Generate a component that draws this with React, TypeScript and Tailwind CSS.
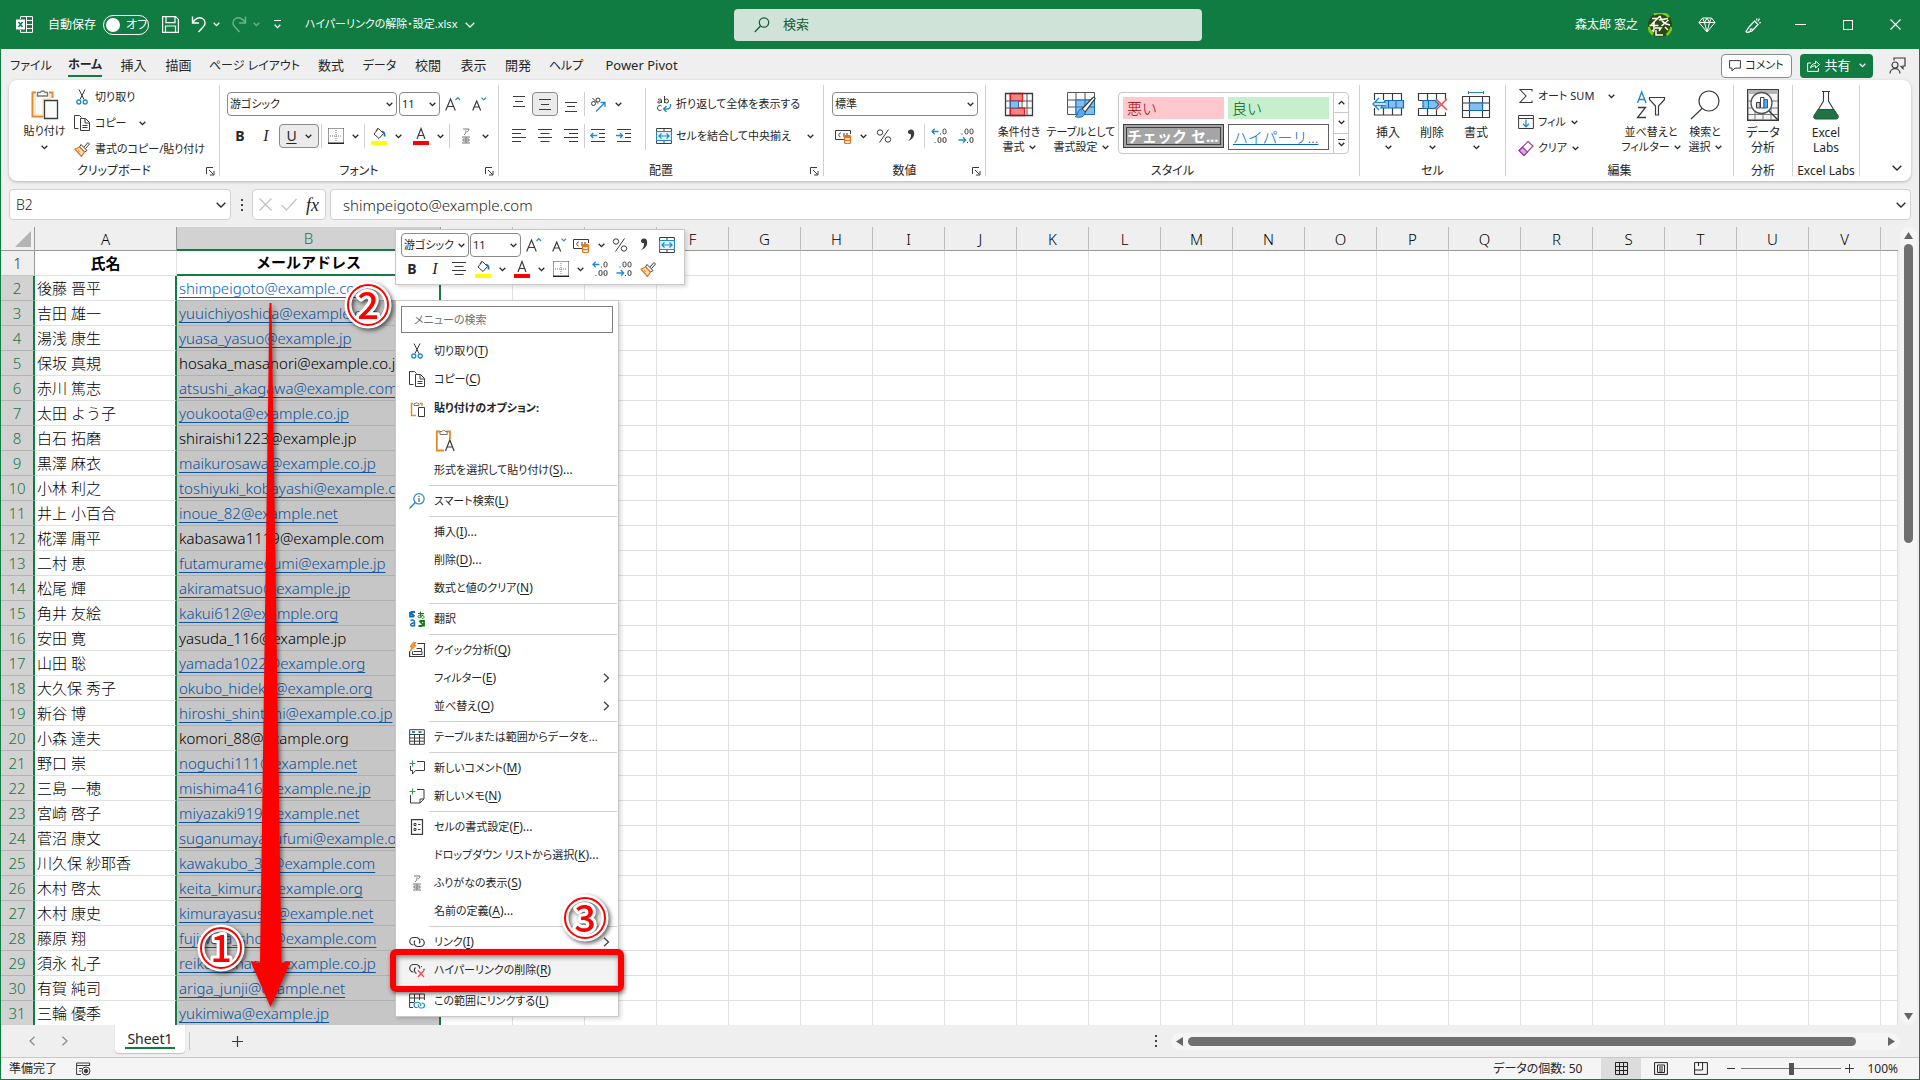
import React from "react";

type P = { children?: React.ReactNode; className?: string };

const D = "#3b3b3b";
const B = "#1e8bcd";

function Ico({ w = 16, h = 16, children, className = "" }: P & { w?: number; h?: number }) {
  return (
    <svg width={w} height={h} viewBox={`0 0 ${w} ${h}`} fill="none" stroke={D} className={`shrink-0 ${className}`} aria-hidden="true">
      {children}
    </svg>
  );
}

const Chev = ({ className = "" }: { className?: string }) => (
  <svg width="7" height="5" viewBox="0 0 7 5" fill="none" stroke="currentColor" strokeWidth="1.3" className={`shrink-0 ${className}`} aria-hidden="true">
    <path d="M.7.8l2.8 2.8L6.3.8" />
  </svg>
);
const BigChev = ({ className = "" }: { className?: string }) => (
  <svg width="10" height="6" viewBox="0 0 10 6" fill="none" stroke="currentColor" strokeWidth="1.3" className={`shrink-0 ${className}`} aria-hidden="true">
    <path d="M.7.7L5 5 9.3.7" />
  </svg>
);

/* ---------- icons ---------- */
const Scissors = () => (
  <Ico>
    <path d="M5 .5l5 10M11 .5l-5 10" />
    <circle cx="4.8" cy="13" r="2" stroke={B} strokeWidth="1.3" />
    <circle cx="11.2" cy="13" r="2" stroke={B} strokeWidth="1.3" />
  </Ico>
);
const CopyI = () => (
  <Ico>
    <path d="M4.5 13.500H.5V.5h5l2 2" />
    <path d="M6.500 3.500h5l4 4v8h-9z" fill="#fff" />
    <path d="M11 3.500V8h4.500M8.500 10.500h5M8.500 12.500h5" />
  </Ico>
);
const Brush = () => (
  <Ico>
    <path d="M10 6l4-4.500 1.500 1.500-4 4.500" fill="#fff" />
    <path d="M7 3.500l6 6-2.500 1.500L5.500 6z" fill="#fff" strokeLinejoin="round" />
    <path d="M5.500 6L1 8l6.500 7.500 3-4.500z" fill="#fbe3c8" stroke="#e07a1f" strokeWidth="1.300" strokeLinejoin="round" />
    <path d="M4 8.500l1.500 2.500" stroke="#e07a1f" />
  </Ico>
);
const PasteBig = () => (
  <Ico w={30} h={32}>
    <path d="M6 4.500H2.500v24h11M19 4.500h3.500V10" stroke="#e08a2c" strokeWidth="2" />
    <path d="M5 7h15v4h-7v16H5z" fill="#fafafa" stroke="#f9d8a8" />
    <path d="M7.500 8V4.500h2.800a2.500 2.500 0 0 1 4.600 0h2.600V8z" fill="#fff" stroke="#777" strokeWidth="1.300" />
    <path d="M14.500 12.500h13v18h-13z" fill="#fafafa" strokeWidth="1.300" />
  </Ico>
);
const PasteSmall = () => (
  <Ico>
    <path d="M4 2.500H2.500v12H7M11 2.500h2V5" stroke="#e08a2c" strokeWidth="1.500" />
    <path d="M5 4.500v-2h1.300a1.400 1.400 0 0 1 2.600 0h1.100v2z" fill="#fff" stroke="#777" />
    <path d="M9.500 6.500h6v9h-6z" fill="#fff" />
  </Ico>
);
const PasteText = () => (
  <Ico w={22} h={24}>
    <path d="M6 3.500H2.800v19H10M12 3.500h4V11" stroke="#e08a2c" strokeWidth="1.800" />
    <path d="M6 6.500v-3h2a1.700 1.700 0 0 1 3.200 0h2v3z" fill="#fff" stroke="#777" />
    <path d="M11.500 23l4.300-11 4.300 11M13 19h5.700" strokeWidth="1.200" />
  </Ico>
);
const Borders = () => (
  <Ico>
    <path d="M.5.500v15M15.500.500v15M.500.500h15" strokeDasharray="1 1" />
    <path d="M8 2v12M2 8h12" stroke="#777" strokeDasharray="1 1" />
    <path d="M0 15.300h16" stroke="#222" strokeWidth="1.500" />
  </Ico>
);
const Fill = () => (
  <Ico h={18}>
    <path d="M7.500 1.500l5 5-4.500 5-5-4.500z" fill="#fff" strokeLinejoin="round" />
    <path d="M5 4l2-3" />
    <path d="M11 4.500c2 .5 3 2 2.500 5" stroke="#1c6fb0" strokeWidth="1.800" />
    <path d="M0 16h16" stroke="#ff0" strokeWidth="4" />
  </Ico>
);
const FontColor = () => (
  <Ico h={18}>
    <path d="M4 12L8 1.500 12 12M5.300 8.500h5.400" strokeWidth="1.200" />
    <path d="M0 16h16" stroke="#f00" strokeWidth="4" />
  </Ico>
);
const Ruby = () => (
  <Ico>
    <path d="M5 1h6c0 1.500-1 2.500-2 3M8 2.500C8 5 7.500 6 6 6.800" stroke="#777" />
    <path d="M4 9h8M5 11h6v2H5zM4 15h8M8 9v6" stroke="#777" />
  </Ico>
);
const GrowA = () => (
  <Ico>
    <path d="M.700 14.500L5.500 3l4.800 11.500M2.400 10.500h6.200" strokeWidth="1.200" />
    <path d="M10.500 4l2.300-2.300L15 4" stroke={B} strokeWidth="1.200" />
  </Ico>
);
const ShrinkA = () => (
  <Ico>
    <path d="M1.700 14.500l4-9.500 4 9.500M3.200 11h5" strokeWidth="1.200" />
    <path d="M10.500 1.700L12.800 4 15 1.700" stroke={B} strokeWidth="1.200" />
  </Ico>
);
const Lines = ({ d }: { d: string }) => (
  <Ico>
    <path d={d} />
  </Ico>
);
const alignTop = "M2 .500h12M4 5.500h8M2 10.500h12";
const alignMid = "M2 3.500h12M4 8.500h8M2 13.500h12";
const alignBot = "M2 6.500h12M4 10.500h8M2 15.500h12";
const alignL = "M1 1.500h14M1 5.500h9M1 9.500h14M1 13.500h9";
const alignC = "M1 1.500h14M3.500 5.500h9M1 9.500h14M3.500 13.500h9";
const alignR = "M1 1.500h14M6 5.500h9M1 9.500h14M6 13.500h9";
const Orient = () => (
  <Ico w={17}>
    <circle cx="3.500" cy="7.500" r="2" />
    <path d="M2.500 2l5.500 5.500" />
    <circle cx="8" cy="4" r="2" />
    <path d="M6 15.500l9-9M10.500 6.500H15V11" stroke={B} strokeWidth="1.300" />
  </Ico>
);
const Indent = ({ right = false }: { right?: boolean }) => (
  <Ico>
    <path d="M1 1.500h14M9 5.500h6M9 9.500h6M1 13.500h14" />
    <path d={right ? "M0 7.500h6.500M4 5l2.500 2.500L4 10" : "M.700 7.500h6.500M3.200 5L.700 7.500 3.200 10"} stroke={B} strokeWidth="1.300" />
  </Ico>
);
const Wrap = () => (
  <Ico>
    <path d="M2 3.500c2-1 3.500-.5 3.500 1V7M5.500 5C1 4.500 1 7 3 7c1.500 0 2.500-1 2.500-2M8.500 0v7" />
    <circle cx="10.500" cy="5" r="2" />
    <path d="M5.500 10c-1.500-1-4-.5-4 2s2.500 3 4 2" />
    <path d="M14.500 8c.5 3-1 5-3.500 5H8M10.500 10L7.500 13l3 3" stroke={B} strokeWidth="1.300" />
  </Ico>
);
const Merge = () => (
  <Ico>
    <path d="M.600.500h14.800v15H.600zM8 .500v3M8 12.500v3" />
    <path d="M.600 3.500h14.800v9H.600z" fill="#e4f2fc" stroke={B} />
    <path d="M3 8h10M5.500 5.500L3 8l2.500 2.500M10.500 5.500L13 8l-2.500 2.500" stroke={B} strokeWidth="1.200" />
  </Ico>
);
const Money = () => (
  <Ico w={17}>
    <path d="M9 11.500H.500v-9h15V6" />
    <path d="M6 5c-2.500-.5-3 4-.5 4M9 5v4M12 5v2" />
    <path d="M9.500 8.500v6c0 1.500 6 1.500 6 0v-6z" fill="#fff" stroke="#e07a1f" strokeWidth="1.300" />
    <path d="M9.500 8.500c0-1.600 6-1.600 6 0s-6 1.600-6 0M9.500 11.500c0 1.500 6 1.500 6 0" stroke="#e07a1f" strokeWidth="1.300" />
  </Ico>
);
const Percent = () => (
  <Ico>
    <circle cx="4" cy="4.500" r="2.700" />
    <circle cx="12" cy="11.500" r="2.700" />
    <path d="M12.500 1.500l-9 13" />
  </Ico>
);
const Comma = () => (
  <Ico w={10}>
    <path d="M5 1.500c-4 0-4 5 0 4.800C5.300 9 4 11.500 2 13c4-1.200 6.200-4 6.200-7.500C8.200 3 7 1.500 5 1.500z" fill={D} stroke="none" />
  </Ico>
);
const Zero = ({ x, y }: { x: number; y: number }) => <rect x={x} y={y} width="3" height="5" rx="1.500" />;
const DecInc = () => (
  <Ico>
    <path d="M1 3.500h6.500M3.700.800L1 3.500l2.700 2.700" stroke={B} strokeWidth="1.300" />
    <Zero x={12} y={1} />
    <Zero x={7} y={9.500} />
    <Zero x={12} y={9.500} />
    <path d="M9.500 5.500v1M4 14v1" />
  </Ico>
);
const DecDec = () => (
  <Ico>
    <path d="M.500 12h7M5 9.300L7.700 12 5 14.700" stroke={B} strokeWidth="1.300" />
    <Zero x={7} y={1} />
    <Zero x={12} y={1} />
    <Zero x={12} y={9.500} />
    <path d="M4 5.500v1M9.500 14v1" />
  </Ico>
);
const CondFmt = () => (
  <Ico w={30} h={26}>
    <path d="M1.500 1.500h27v22h-27zM1.500 9h27M1.500 16h27M6 1.500v22M18 1.500v22M23 1.500v22" fill="#fafafa" stroke="#555" />
    <path d="M6.500 1.500h12V9h-12zM6.500 16h14v7.500h-14z" fill="#ff8080" stroke="#e02020" strokeWidth="1.300" />
    <path d="M6.500 9h8v7h-8z" fill="#83beec" stroke="#1e6fb8" />
    <path d="M1.500 1.500h27v22h-27z" strokeWidth="1.300" />
  </Ico>
);
const TableFmt = () => (
  <Ico w={30} h={28}>
    <path d="M1.500 1.500h27v22h-27zM1.500 9h27M1.500 16h27M10 1.500v22M19 1.500v22" fill="#fafafa" stroke="#555" />
    <path d="M10 9h18.500v14.500H10z" fill="#83beec" stroke="#1e6fb8" />
    <path d="M19 9v14M10 16h18" stroke="#1e6fb8" />
    <path d="M16 18L27 6.500c1-.8 2.500.5 1.800 1.700L19 21z" fill="#fff" strokeWidth="1.200" />
    <path d="M16 18c-3 0-4 2-4.500 5-.5 1.500-1.500 2-2.500 2.500 5 2 10 .5 10-4.500z" fill="#5ea9e0" stroke="#1e6fb8" />
  </Ico>
);
const CellIns = () => (
  <Ico w={34} h={26}>
    <path d="M3.500 8V1.500h27v7M3.500 16v7h27v-7M12.500 1.500V8M21.500 1.500V8M12.500 16v7M21.500 16v7" strokeWidth="1.200" />
    <path d="M14 8.500h18.500v7.500H10z" fill="#83beec" stroke="#0f6cbd" strokeWidth="1.200" />
    <path d="M17.500 8.500V16M25 8.500V16" stroke="#0f6cbd" />
    <path d="M15 10.500H4.500v3H15z" fill="#fff" stroke="none" />
    <path d="M15 10.500H4M15 13.500H4M8 6L2 12l6 6" stroke={B} strokeWidth="1.400" />
  </Ico>
);
const CellDel = () => (
  <Ico w={34} h={26}>
    <path d="M3.500 8.500v-7h27v6M3.500 16.500v7h27v-3M12.500 1.500v7M21.500 1.500v7M12.500 16.500v7M21.500 16.500v7M3.500 8.500h5M3.500 16.500h5" strokeWidth="1.200" />
    <path d="M8 8.500h12l4 4-4 4H8z" fill="#83beec" stroke="#0f6cbd" strokeWidth="1.200" />
    <path d="M13.500 8.500v8" stroke="#0f6cbd" />
    <path d="M21 7l11 11M32 7L21 18" stroke="#f04a4a" strokeWidth="1.500" />
  </Ico>
);
const CellFmt = () => (
  <Ico w={30} h={28}>
    <path d="M7.500 0v3M22.500 0v3M7.500 1.500h15" stroke={B} strokeWidth="1.200" />
    <path d="M1.500 5.500h27v21h-27zM8.500 5.500v21M21.500 5.500v21M1.500 12h27M1.500 19.500h27" fill="#fafafa" strokeWidth="1.100" />
    <path d="M8.500 12h13v7.500h-13z" fill="#83beec" stroke="#0f6cbd" strokeWidth="1.200" />
  </Ico>
);
const Sigma = () => (
  <Ico>
    <path d="M14 3.500v-2H2l6 6.500-6 6.500h12v-2" strokeWidth="1.100" />
  </Ico>
);
const FillDown = () => (
  <Ico>
    <path d="M.600 1.500h14.800v13H.600zM.600 4.500h14.800" />
    <path d="M8 5.500v7M5 9.800l3 3 3-3" stroke={B} strokeWidth="1.300" />
  </Ico>
);
const Eraser = () => (
  <Ico>
    <path d="M10 1.500l5 4.500-9 9.500-5-5z" fill="#fff" stroke="#9b3fa5" strokeWidth="1.200" />
    <path d="M4.500 7.200l5 4.800L6 15.500l-5-5z" fill="#dda8e0" stroke="#9b3fa5" strokeWidth="1.200" />
  </Ico>
);
const SortFilter = () => (
  <Ico w={30} h={30}>
    <path d="M1.500 13L5.700 2 10 13M3 9.500h5.500" stroke={B} strokeWidth="1.400" />
    <path d="M2 17.500h7.500L1.500 27.500h8.500" strokeWidth="1.300" />
    <path d="M13.500 7.500h15v2l-6 6.500v9h-3v-9l-6-6.500z" strokeWidth="1.200" />
  </Ico>
);
const FindI = () => (
  <Ico w={30} h={30}>
    <circle cx="19" cy="11" r="10" strokeWidth="1.200" />
    <path d="M12 18.500L1 29" strokeWidth="1.200" />
  </Ico>
);
const DataAn = () => (
  <Ico w={32} h={32}>
    <path d="M.700.700h30.600v30.600H.700z" fill="#f6f6f6" strokeWidth="1.400" />
    <path d="M1 1h30v4H1z" fill="#b5b5b5" stroke="none" />
    <path d="M1 12h30M1 19h30M1 25.500h30M8 19v12M16 19v12M24 19v12" stroke="#777" />
    <circle cx="14.500" cy="14" r="10.500" fill="#fff" stroke="#555" strokeWidth="1.300" />
    <path d="M22 22l9 9" strokeWidth="1.400" />
    <path d="M9.500 13.500h3.500V19H9.500z" fill="#ccc" />
    <path d="M13.500 8.500h3.500V19h-3.500z" fill="#fff" />
    <path d="M17 10.500h3.500V19H17z" fill="#5ea9e0" stroke="#0f6cbd" />
  </Ico>
);
const Flask = () => (
  <Ico w={28} h={30}>
    <path d="M10 1.500h8M11.500 1.500V11L5.500 21M16.500 1.500V11l6 10" strokeWidth="1.100" />
    <path d="M6 19.500h16l4 6c.8 1.800 0 3.500-2 3.500H4c-2 0-2.800-1.700-2-3.500z" fill="#217346" stroke="#185c37" />
  </Ico>
);
const Launcher = () => (
  <Ico w={9} h={9}>
    <path d="M.500 7V.500H7M3 3l4.500 4.500M4 8h4V4" />
  </Ico>
);
const Chain = () => (
  <Ico>
    <path d="M4.500 11a3.700 3.700 0 0 1 0-7.500h2.700a3.700 3.700 0 0 1 3 5.800" strokeWidth="1.200" />
    <path d="M11.500 5a3.700 3.700 0 0 1 0 7.500H8.800a3.700 3.700 0 0 1-3-5.800" strokeWidth="1.200" />
  </Ico>
);
const ChainDel = () => (
  <Ico>
    <path d="M4.500 10a3.700 3.700 0 0 1 0-7.500h2.700a3.700 3.700 0 0 1 3.500 4" strokeWidth="1.200" />
    <path d="M7.500 11.500a3.700 3.700 0 0 1-1-6M12 4.500l1 .3M15 6.800v1.500" strokeWidth="1.200" />
    <path d="M9 8.500l6 6.500M15 8.500L9 15" stroke="#f04a4a" strokeWidth="1.300" />
  </Ico>
);
const SmartFind = () => (
  <Ico>
    <circle cx="10" cy="5.800" r="5.200" stroke={B} strokeWidth="1.200" />
    <path d="M6.300 9.500L.500 15.500" stroke={B} strokeWidth="1.300" />
    <path d="M10 5v4M10 3v1" />
  </Ico>
);
const Translate = () => (
  <Ico>
    <path d="M1 1v4.500h4M1 1l4.500 4.500M6 1H2" stroke="#0f6cbd" strokeWidth="1.800" />
    <path d="M1.500 9.500c2-1 4-.500 4 1.500v4.500M5.500 12C1 11.500 1 15 3 15c1.500 0 2.500-1 2.500-2" stroke="#0f6cbd" strokeWidth="1.400" />
    <path d="M9 2.500h6M11.500.500c0 3 0 5 .5 6.500M14 3.500c-1 3-5 4.500-5 2 0-2 6-2 6 .5 0 1-1 1.500-2 1.700" stroke="#107c10" />
    <path d="M10.500 10H15v5.500M15 15l-4.500-5M9.500 15h4" stroke="#107c10" strokeWidth="1.800" />
  </Ico>
);
const Quick = () => (
  <Ico>
    <path d="M8.500 1.500h7v13H.600V9" strokeWidth="1.200" />
    <path d="M4.500 9.500h8M12.500 9.500v-3h-5M3.500 9.500v3h9.500v-3" />
    <path d="M4 .500L1 5h2L1 9.500 7 3.500H5L7 .500z" fill="#f39a3c" stroke="#e07a1f" strokeWidth=".800" />
  </Ico>
);
const TableI = () => (
  <Ico>
    <path d="M.700.700h14.600v14.600H.700zM.700 5.500h14.600M.700 9h14.600M.700 12.200h14.600M5.500 5.500v9.800M10.500 5.500v9.800" />
    <path d="M3 3h3M9.500 3h3" stroke={B} strokeWidth="2" />
  </Ico>
);
const Comment = () => (
  <Ico>
    <path d="M8 1.500h7.500v9h-9L3.500 14v-3.500H1.500V6" />
    <path d="M3.500.500v6M.500 3.500h6" stroke="#2f9e4f" strokeWidth="1.200" />
  </Ico>
);
const Memo = () => (
  <Ico>
    <path d="M8 1.500h7v9.500l-4 4H1.500V7M11 15v-4h4" />
    <path d="M3.500.500v6M.500 3.500h6" stroke="#2f9e4f" strokeWidth="1.200" />
  </Ico>
);
const CellProps = () => (
  <Ico>
    <path d="M2.500.700h11v14.600h-11z" strokeWidth="1.200" />
    <path d="M5 4.500h2v2H5zM5 9.500h2v2H5zM9 5.500h2.500M9 10.500h2.500" />
  </Ico>
);
const RangeLink = () => (
  <Ico>
    <path d="M4 14.500H.600V1h14.800v6M.600 5h14.800M.600 9.500H5M5.500 1v8M10.500 1v6" />
    <path d="M8.500 14.500h-1a2.500 2.500 0 0 1 0-5h2a2.500 2.500 0 0 1 2 3.500M12.500 10h.5a2.500 2.500 0 0 1 0 5h-1.500a2.500 2.500 0 0 1-2-3.500" stroke={B} strokeWidth="1.200" />
  </Ico>
);

/* ---------- ribbon building blocks ---------- */
function Group({ label, width, launcher, children }: P & { label: string; width: string; launcher?: boolean }) {
  return (
    <section className={`flex shrink-0 ${width}`} aria-label={label}>
      <div className="flex min-w-0 flex-1 flex-col">
        <div className="h-[81px]">{children}</div>
        <div className="relative flex h-5 items-center justify-center whitespace-nowrap text-xs">
          {label}
          {launcher && (
            <button aria-label={`${label}の設定`} className="absolute right-1 top-[6px]">
              <Launcher />
            </button>
          )}
        </div>
      </div>
      <div className="my-[5px] w-px bg-[#d0d0d0]" />
    </section>
  );
}
const VSep = ({ className = "h-6" }: { className?: string }) => <div className={`w-px shrink-0 bg-[#d0d0d0] ${className}`} />;
function IB({ label, w = "w-[26px]", on, children }: P & { label: string; w?: string; on?: boolean }) {
  return (
    <button aria-label={label} className={`flex h-6 shrink-0 items-center justify-center gap-2 ${w} ${on ? "rounded border border-[#8a8a8a] bg-[#ebebeb]" : ""}`}>
      {children}
    </button>
  );
}
function Big({ icon, lines, chev, w }: { icon: React.ReactNode; lines: string[]; chev?: "inline" | "below"; w: string }) {
  return (
    <button className={`flex shrink-0 flex-col items-center whitespace-nowrap ${w}`}>
      <span className="flex h-[41px] items-center justify-center">{icon}</span>
      {lines.map((l, i) => (
        <span key={l} className="flex h-[15px] items-center gap-1">
          {l}
          {chev === "inline" && i === lines.length - 1 && <Chev />}
        </span>
      ))}
      {chev === "below" && <span className="flex h-[15px] items-center"><Chev /></span>}
    </button>
  );
}
function Combo({ value, label, w }: { value: string; label: string; w: string }) {
  return (
    <span className={`relative flex h-6 shrink-0 items-center rounded border border-[#8a8a8a] bg-white ${w}`}>
      <select aria-label={label} defaultValue={value} className="h-full w-full appearance-none bg-transparent pl-[2px] pr-3 outline-none">
        <option>{value}</option>
      </select>
      <Chev className="pointer-events-none absolute right-[3px]" />
    </span>
  );
}

function TitleBar() {
  return (
    <header className="flex h-[49px] shrink-0 items-center bg-[#107c41] text-white">
      <div className="flex flex-1 items-center">
        <svg className="ml-[15px] shrink-0" width="17" height="17" viewBox="0 0 17 17" fill="none" stroke="#fff" aria-hidden="true">
          <path d="M4.500 3V.600h12v15.800h-12V14M10.500.600v15.800M10 4.500h6.500M10 8.500h6.500M10 12.500h6.500" />
          <path d="M0 3.500h9v10H0z" fill="#fff" stroke="none" />
          <path d="M2.500 6l4 5M6.500 6l-4 5" stroke="#107c41" strokeWidth="1.500" />
        </svg>
        <label htmlFor="autosave" className="ml-[15px] w-[55px]">自動保存</label>
        <span className="relative flex h-5 w-[46px] items-center rounded-full border border-white">
          <input id="autosave" type="checkbox" role="switch" className="absolute inset-0 m-0 appearance-none rounded-full" />
          <span className="ml-[2px] h-[14px] w-[14px] rounded-full bg-white" />
          <span className="ml-[6px]">オフ</span>
        </span>
        <button aria-label="上書き保存" className="ml-[13px]">
          <Ico className="block" w={17} h={17}><path d="M.600.600h13l2.800 2.800v13H.600zM4 .600v6h9v-6M3.500 16.400V10h10v6.400" stroke="#fff" strokeWidth="1.200" /></Ico>
        </button>
        <button aria-label="元に戻す" className="ml-3 flex items-center gap-[6px]">
          <Ico w={16} h={17}><path d="M1.500.500V7H8M1.500 7C4 2 8.500.800 11.500 2.500c3 1.800 3.300 5.500 1 8L7.500 16" stroke="#fff" strokeWidth="1.400" /></Ico>
          <Chev />
        </button>
        <button aria-label="やり直し" className="ml-[11px] flex items-center gap-[6px] opacity-40">
          <Ico w={16} h={17}><path d="M14.500.500V7H8M14.500 7C12 2 7.500.800 4.500 2.500c-3 1.800-3.300 5.500-1 8L8.500 16" stroke="#fff" strokeWidth="1.400" /></Ico>
          <Chev />
        </button>
        <button aria-label="クイック アクセス ツール バーのカスタマイズ" className="ml-[14px] flex flex-col items-center gap-[3px]">
          <span className="h-px w-[7px] bg-white" />
          <Chev />
        </button>
        <button className="ml-6 flex items-center gap-2 whitespace-nowrap text-[11px]">
          ハイパーリンクの解除・設定.xlsx <BigChev />
        </button>
      </div>
      <label className="ml-4 flex h-8 w-[468px] shrink-0 items-center rounded bg-[#cfe3d8] px-5 text-[#185c37]">
        <Ico className="mr-[13px]"><circle cx="10" cy="5.500" r="4.700" stroke="#185c37" strokeWidth="1.200" /><path d="M6.500 9L.800 15" stroke="#185c37" strokeWidth="1.300" /></Ico>
        <input aria-label="検索" placeholder="検索" className="min-w-0 flex-1 bg-transparent text-[13px] outline-none placeholder:text-[#185c37]" />
      </label>
      <div className="flex flex-1 items-center justify-end">
        <span className="whitespace-nowrap">森太郎 窓之</span>
        <svg className="ml-[10px] mr-[26px]" width="24" height="24" viewBox="0 0 24 24" aria-hidden="true">
          <circle cx="12" cy="12" r="12" fill="#2b4a12" />
          <path d="M6 1.500A12 12 0 0 1 21 4M23.500 14a12 12 0 0 1-5 8M.700 14A12 12 0 0 0 5 21.500" fill="none" stroke="#86c81a" strokeWidth="2.500" />
          <path d="M4 5.500h7M3 12l9-9M6 9.500v8M1.500 12.500h9M12 3c1 5 4 8 10 9M11 7l9-1.500M13.500 13l7-6M7 15h6l-2 3M8 17v5h7M17 14l3 3M4 17l2 2" fill="none" stroke="#fff" strokeWidth="1.500" />
        </svg>
        <Ico w={18} className="mr-[29px]"><path d="M4.500 1h9L17 5.500 9 15 1 5.500zM1 5.500h16M6.500 5.500L9 15l2.500-9.500M4.500 1l2 4.500L9 1l2.500 4.500 2-4.500" stroke="#fff" strokeLinejoin="round" /></Ico>
        <Ico w={17} className="mr-[33px]"><path d="M9.500 4l3.500 3.500-6 6.500-5 1.500L1 14.500l3.500-5zM3 15l1.500 .500M6 14c-2-1 0-3 1.500-1.500M11.500 1.500l.5 2M14.500 1.500l-1.500 3M16 5.500l-2 .5" stroke="#fff" strokeWidth="1.200" /></Ico>
        <button aria-label="最小化" className="mr-[37px] flex h-4 items-center"><span className="h-px w-[11px] bg-white" /></button>
        <button aria-label="最大化" className="mr-[37px] h-[10px] w-[10px] border border-white" />
        <button aria-label="閉じる" className="mr-[18px]"><Ico w={11} h={11}><path d="M.500.500l10 10M10.500.500l-10 10" stroke="#fff" strokeWidth="1.200" /></Ico></button>
      </div>
    </header>
  );
}

const tabs: [string, string][] = [
  ["ファイル", "w-[56px] text-xs"], ["ホーム", "w-[52px]"], ["挿入", "w-[45px] text-[13px]"], ["描画", "w-[45px] text-[13px]"], ["ページ レイアウト", "w-[107px] text-xs"], ["数式", "w-[46px] text-[13px]"],
  ["データ", "w-[51px] text-xs"], ["校閲", "w-[46px] text-[13px]"], ["表示", "w-[45px] text-[13px]"], ["開発", "w-[44px] text-[13px]"], ["ヘルプ", "w-[52px] text-xs"], ["Power Pivot", "w-[99px] text-[13px]"],
];

function TabRow() {
  return (
    <nav className="flex h-[31px] shrink-0 items-center pl-[2px] pt-[2px]">
      {tabs.map(([t, w]) => (
        <button key={t} className={`flex h-full shrink-0 items-center justify-center whitespace-nowrap ${w}`}>
          {t === "ホーム" ? <span className="flex h-[23px] items-center border-b-2 border-[#107c41] text-xs font-bold">{t}</span> : t}
        </button>
      ))}
      <div className="flex-1" />
      <button className="mr-2 flex h-6 w-[71px] items-center justify-center gap-1 whitespace-nowrap rounded border border-[#8a8a8a] bg-white text-[11px]">
        <Ico w={12} h={12}><path d="M.600.600h10.800v7.500H6L3 11V8.100H.600z" /></Ico>コメント
      </button>
      <button className="mr-4 flex h-6 w-[73px] items-center justify-center gap-1 rounded bg-[#107c41] text-[13px] text-white">
        <Ico w={13} h={13}><path d="M4 4H.600v8.400h10.800V9M3.500 9c.5-3 2.500-4.500 5-4.500V2l4 3.500-4 3.500V6.700C6.500 6.700 5 7.500 3.500 9z" stroke="#fff" /></Ico>
        <span>共有</span><Chev className="ml-1" />
      </button>
      <button aria-label="Teams でプレゼンテーション" className="mr-[13px]">
        <Ico w={17} h={17}><circle cx="6" cy="8" r="3" strokeWidth="1.200" /><path d="M1 16.500c0-6.500 10-6.500 10 0M5 3.500V1h11v8h-2v2.500L11.500 9" strokeWidth="1.200" /></Ico>
      </button>
    </nav>
  );
}

function Ribbon() {
  const row = "flex h-[26px] items-center";
  const row2 = "flex h-8 items-center";
  return (
    <div className="mx-2 flex h-[101px] shrink-0 overflow-hidden rounded-lg bg-white text-[11px] shadow-[0_1px_3px_rgba(0,0,0,0.25)]">
      <Group label="クリップボード" width="w-[211px]" launcher>
        <div className="flex pt-1">
          <button className="flex w-[65px] flex-col items-center pl-[6px]">
            <span className="flex h-[39px] items-center"><PasteBig /></span>
            <span className="flex h-4 items-center whitespace-nowrap">貼り付け</span>
            <Chev className="mt-[6px]" />
          </button>
          <div className="flex flex-col">
            <button className={row}><span className="flex w-[21px]"><Scissors /></span>切り取り</button>
            <button className={row}><span className="flex w-[21px]"><CopyI /></span>コピー<Chev className="ml-3" /></button>
            <button className={`${row} whitespace-nowrap`}><span className="flex w-[21px]"><Brush /></span>書式のコピー/貼り付け</button>
          </div>
        </div>
      </Group>

      <Group label="フォント" width="w-[279px]" launcher>
        <div className="pl-[7px] pt-2">
          <div className={row2}>
            <Combo label="フォント名" value="游ゴシック" w="w-[170px]" />
            <span className="w-[2px]" />
            <Combo label="フォント サイズ" value="11" w="w-[41px]" />
            <IB label="拡大"><GrowA /></IB>
            <IB label="縮小"><ShrinkA /></IB>
          </div>
          <div className={row2}>
            <IB label="太字"><b className="text-sm">B</b></IB>
            <IB label="斜体"><i className="font-['Liberation_Serif',serif] text-base">I</i></IB>
            <IB label="下線" w="w-10" on><span className="text-sm underline underline-offset-2">U</span><Chev /></IB>
            <span className="w-[2px]" /><VSep />
            <IB label="罫線" w="w-[42px]"><Borders /><Chev /></IB>
            <VSep />
            <IB label="塗りつぶしの色" w="w-[42px]"><Fill /><Chev /></IB>
            <IB label="フォントの色" w="w-[42px]"><FontColor /><Chev /></IB>
            <VSep />
            <IB label="ふりがな" w="w-[46px]"><Ruby /><Chev /></IB>
          </div>
        </div>
      </Group>

      <Group label="配置" width="w-[325px]" launcher>
        <div className="flex pl-[7px] pt-2">
          <div>
            <div className={row2}>
              <IB label="上揃え"><Lines d={alignTop} /></IB>
              <IB label="上下中央揃え" on><Lines d={alignMid} /></IB>
              <IB label="下揃え"><Lines d={alignBot} /></IB>
              <VSep />
              <IB label="方向" w="w-[42px]"><Orient /><Chev /></IB>
            </div>
            <div className={row2}>
              <IB label="左揃え"><Lines d={alignL} /></IB>
              <IB label="中央揃え"><Lines d={alignC} /></IB>
              <IB label="右揃え"><Lines d={alignR} /></IB>
              <VSep />
              <IB label="インデントを減らす"><Indent /></IB>
              <IB label="インデントを増やす"><Indent right /></IB>
            </div>
          </div>
          <VSep className="ml-2 h-[62px]" />
          <div className="pl-[10px]">
            <button className={`${row2} gap-1 whitespace-nowrap`}><Wrap />折り返して全体を表示する</button>
            <button className={`${row2} gap-1 whitespace-nowrap`}><Merge />セルを結合して中央揃え<Chev className="ml-3" /></button>
          </div>
        </div>
      </Group>

      <Group label="数値" width="w-[162px]" launcher>
        <div className="pl-2 pt-2">
          <div className={row2}><Combo label="表示形式" value="標準" w="w-[146px]" /></div>
          <div className={row2}>
            <IB label="通貨" w="w-[38px]"><Money /><Chev /></IB>
            <IB label="パーセント" w="w-7"><Percent /></IB>
            <IB label="桁区切り"><Comma /></IB>
            <VSep />
            <IB label="小数点以下の表示桁数を増やす" w="w-7"><DecInc /></IB>
            <IB label="小数点以下の表示桁数を減らす"><DecDec /></IB>
          </div>
        </div>
      </Group>

      <Group label="スタイル" width="w-[374px]">
        <div className="flex pt-1">
          <Big w="w-[66px]" icon={<CondFmt />} lines={["条件付き", "書式"]} chev="inline" />
          <Big w="w-[58px]" icon={<TableFmt />} lines={["テーブルとして", "書式設定"]} chev="inline" />
          <div className="ml-2 mt-2 flex h-[62px] w-[231px] overflow-hidden rounded border border-[#c8c8c8]">
            <div className="grid flex-1 grid-cols-2 gap-x-1 gap-y-1 p-1 pb-[3px] text-[15px] font-light [font-feature-settings:normal]">
              <button className="h-[22px] bg-[#ffc7ce] pl-1 text-left leading-5 text-[#9c0006]">悪い</button>
              <button className="h-[22px] bg-[#c6efce] pl-1 text-left leading-5 text-[#006100]">良い</button>
              <button className="h-6 overflow-hidden whitespace-nowrap border-4 border-double border-[#3f3f3f] bg-[#a5a5a5] text-left font-bold leading-4 text-white">チェック セ...</button>
              <button className="h-[26px] overflow-hidden whitespace-nowrap border border-[#606060] px-1 text-left leading-5 text-[#0563c1] underline">ハイパーリ...</button>
            </div>
            <div className="flex w-[15px] flex-col divide-y divide-[#c8c8c8] border-l border-[#c8c8c8]">
              <button aria-label="前へ" className="flex flex-1 items-center justify-center"><Chev className="rotate-180" /></button>
              <button aria-label="次へ" className="flex flex-1 items-center justify-center"><Chev /></button>
              <button aria-label="その他" className="flex flex-1 flex-col items-center justify-center gap-[2px]"><span className="h-px w-[7px] bg-[#333]" /><Chev /></button>
            </div>
          </div>
        </div>
      </Group>

      <Group label="セル" width="w-[146px]">
        <div className="flex pl-[6px] pt-1 text-xs">
          <Big w="w-11" icon={<CellIns />} lines={["挿入"]} chev="below" />
          <Big w="w-11" icon={<CellDel />} lines={["削除"]} chev="below" />
          <Big w="w-11" icon={<CellFmt />} lines={["書式"]} chev="below" />
        </div>
      </Group>

      <Group label="編集" width="w-[228px]">
        <div className="flex pl-3 pt-[3px]">
          <div className="w-[103px]">
            <button className={`${row} whitespace-nowrap`}><span className="flex w-5"><Sigma /></span><span className="w-[70px] text-left">オート SUM</span><Chev /></button>
            <button className={row}><span className="flex w-5"><FillDown /></span>フィル<Chev className="ml-[5px]" /></button>
            <button className={row}><span className="flex w-5"><Eraser /></span>クリア<Chev className="ml-[5px]" /></button>
          </div>
          <div className="flex pt-px">
            <Big w="w-[60px]" icon={<SortFilter />} lines={["並べ替えと", "フィルター"]} chev="inline" />
            <Big w="w-12" icon={<FindI />} lines={["検索と", "選択"]} chev="inline" />
          </div>
        </div>
      </Group>

      <Group label="分析" width="w-[59px]">
        <div className="flex justify-center pt-1 text-xs"><Big w="w-14" icon={<DataAn />} lines={["データ", "分析"]} /></div>
      </Group>
      <Group label="Excel Labs" width="w-[67px]">
        <div className="flex justify-center pt-1 text-xs"><Big w="w-14" icon={<Flask />} lines={["Excel", "Labs"]} /></div>
      </Group>
      <div className="flex flex-1 items-end justify-end pb-[10px] pr-[9px]">
        <button aria-label="リボンを折りたたむ"><BigChev /></button>
      </div>
    </div>
  );
}

function FormulaBar() {
  const box = "flex h-[31px] items-center rounded border border-[#d0d0d0] bg-white";
  return (
    <div className="mx-2 mb-[7px] mt-2 flex shrink-0 items-center">
      <div className={`${box} w-[222px] shrink-0 pr-1`}>
        <input aria-label="名前ボックス" defaultValue="B2" className="min-w-0 flex-1 pl-[6px] text-sm font-light outline-none" />
        <BigChev />
      </div>
      <span className="flex w-[21px] flex-col items-center gap-[3px]">
        {[0, 1, 2].map((i) => <span key={i} className="h-[2px] w-[2px] bg-[#444]" />)}
      </span>
      <div className={`${box} mr-1 w-[74px] shrink-0 justify-between px-[6px]`}>
        <button aria-label="キャンセル"><Ico w={13} h={13}><path d="M.500.500l12 12M12.500.500l-12 12" stroke="#c0c0c0" strokeWidth="1.200" /></Ico></button>
        <button aria-label="入力"><Ico w={16} h={13}><path d="M.500 7l5 5L15.500 1" stroke="#c0c0c0" strokeWidth="1.200" /></Ico></button>
        <button aria-label="関数の挿入" className="font-['Liberation_Serif',serif] text-lg italic leading-none">fx</button>
      </div>
      <div className={`${box} min-w-0 flex-1 pr-1`}>
        <input aria-label="数式バー" defaultValue="shimpeigoto@example.com" className="min-w-0 flex-1 pl-3 text-[15px] font-light outline-none" />
        <BigChev />
      </div>
    </div>
  );
}

/* name, address, and 1 when the address is plain text */
const rows: [string, string, number?][] = [
  ["後藤 晋平", "shimpeigoto@example.com"],
  ["吉田 雄一", "yuuichiyoshida@example.org"],
  ["湯浅 康生", "yuasa_yasuo@example.jp"],
  ["保坂 真規", "hosaka_masanori@example.co.jp", 1],
  ["赤川 篤志", "atsushi_akagawa@example.com"],
  ["太田 よう子", "youkoota@example.co.jp"],
  ["白石 拓磨", "shiraishi1223@example.jp", 1],
  ["黒澤 麻衣", "maikurosawa@example.co.jp"],
  ["小林 利之", "toshiyuki_kobayashi@example.co.jp"],
  ["井上 小百合", "inoue_82@example.net"],
  ["椛澤 庸平", "kabasawa1119@example.com", 1],
  ["二村 恵", "futamuramegumi@example.jp"],
  ["松尾 輝", "akiramatsuo@example.jp"],
  ["角井 友絵", "kakui612@example.org"],
  ["安田 寛", "yasuda_116@example.jp", 1],
  ["山田 聡", "yamada1022@example.org"],
  ["大久保 秀子", "okubo_hideko@example.org"],
  ["新谷 博", "hiroshi_shintani@example.co.jp"],
  ["小森 達夫", "komori_88@example.org", 1],
  ["野口 崇", "noguchi111@example.net"],
  ["三島 一穂", "mishima416@example.ne.jp"],
  ["宮崎 啓子", "miyazaki919@example.net"],
  ["菅沼 康文", "suganumayasufumi@example.org"],
  ["川久保 紗耶香", "kawakubo_33@example.com"],
  ["木村 啓太", "keita_kimura@example.org"],
  ["木村 康史", "kimurayasushi@example.net"],
  ["藤原 翔", "fujiwara_shou@example.com"],
  ["須永 礼子", "reiko_sunaga@example.co.jp"],
  ["有賀 純司", "ariga_junji@example.net"],
  ["三輪 優季", "yukimiwa@example.jp"],
];
const cols = "CDEFGHIJKLMNOPQRSTUV".split("");

function Grid() {
  const blanks = [...cols, ""];
  return (
    <div className="min-w-0 flex-1 overflow-hidden">
      <table className="w-full table-fixed border-separate border-spacing-0 text-[15px] font-light text-black">
        <colgroup>
          <col className="w-[34px]" />
          <col className="w-[142px]" />
          <col className="w-[264px]" />
          {cols.map((c) => <col key={c} className="w-[72px]" />)}
          <col />
        </colgroup>
        <thead>
          <tr>
            <th aria-label="すべて選択" className="h-6 border-b border-r border-[#9a9a9a] bg-[#efefef] p-0">
              <svg className="ml-auto mr-[3px]" width="16" height="16" viewBox="0 0 16 16" aria-hidden="true"><path d="M16 0v16H0z" fill="#b4b4b4" /></svg>
            </th>
            <th className="border-b border-r border-[#9a9a9a] bg-[#efefef] p-0 font-light leading-[22px]">A</th>
            <th className="border-b-2 border-r border-[#9a9a9a] border-b-[#107c41] bg-[#d2d2d2] p-0 font-light leading-[21px] text-[#217346]">B</th>
            {blanks.map((c, i) => <th key={i} className={`border-b border-b-[#9a9a9a] bg-[#efefef] p-0 font-light leading-[22px] ${c ? "border-r border-r-[#bdbdbd]" : ""}`}>{c}</th>)}
          </tr>
        </thead>
        <tbody>
          <tr>
            <th className="h-[25px] border-b border-r border-[#9a9a9a] border-b-[#c4c4c4] bg-[#efefef] p-0 font-light leading-[23px] text-[#333]">1</th>
            <td className="border-b border-r border-[#e0e0e0] p-0 text-center font-bold leading-[22px]">氏名</td>
            <td className="border-b-2 border-r border-[#e0e0e0] border-b-[#107c41] p-0 text-center font-bold leading-[21px] [font-feature-settings:normal]">メールアドレス</td>
            {blanks.map((_, i) => <td key={i} className="border-b border-r border-[#e0e0e0] p-0" />)}
          </tr>
          {rows.map(([name, mail, plain], r) => (
            <tr key={r}>
              <th className="h-[25px] border-b border-r-2 border-b-[#b4b4b4] border-r-[#107c41] bg-[#d2d2d2] p-0 font-light leading-[23px] text-[#217346]">{r + 2}</th>
              <td className="whitespace-nowrap border-b border-r-2 border-b-[#e0e0e0] border-r-[#107c41] p-0 pl-[2px] leading-[22px] [font-feature-settings:normal]">{name}</td>
              <td className={`overflow-hidden whitespace-nowrap border-b border-r-2 border-b-[#b0b0b0] border-r-[#107c41] p-0 pl-[2px] leading-[23px] ${r ? "bg-[#c6c6c6]" : "bg-white"}`}>
                {plain ? mail : <a href={`mailto:${mail}`} className={`underline underline-offset-[3px] [text-decoration-skip-ink:none] ${r ? "text-[#0d529c]" : "text-[#0563c1]"}`}>{mail}</a>}
              </td>
              {blanks.map((_, i) => <td key={i} className="border-b border-r border-[#e0e0e0] p-0" />)}
            </tr>
          ))}
        </tbody>
      </table>
    </div>
  );
}

function MiniToolbar() {
  return (
    <div className="absolute left-[394px] top-[229px] w-[290px] border border-[#c8c8c8] bg-white px-[5px] py-[3px] text-[11px] shadow-[2px_2px_4px_rgba(0,0,0,0.15)]">
      <div className="flex h-6 items-center">
        <Combo label="フォント名" value="游ゴシック" w="w-[68px]" />
        <span className="w-[2px]" />
        <Combo label="フォント サイズ" value="11" w="w-[51px]" />
        <IB label="拡大"><GrowA /></IB>
        <IB label="縮小" w="w-6"><ShrinkA /></IB>
        <IB label="通貨" w="w-9"><Money /><Chev /></IB>
        <IB label="パーセント"><Percent /></IB>
        <IB label="桁区切り" w="w-[22px]"><Comma /></IB>
        <IB label="結合" w="w-6"><Merge /></IB>
      </div>
      <div className="flex h-6 items-center">
        <IB label="太字" w="w-[22px]"><b className="text-sm">B</b></IB>
        <IB label="斜体" w="w-6"><i className="font-['Liberation_Serif',serif] text-base">I</i></IB>
        <IB label="中央揃え" w="w-6"><Lines d={alignC} /></IB>
        <IB label="塗りつぶしの色" w="w-[39px]"><Fill /><Chev /></IB>
        <IB label="フォントの色" w="w-[39px]"><FontColor /><Chev /></IB>
        <IB label="罫線" w="w-[39px]"><Borders /><Chev /></IB>
        <IB label="小数点以下の表示桁数を増やす" w="w-6"><DecInc /></IB>
        <IB label="小数点以下の表示桁数を減らす" w="w-6"><DecDec /></IB>
        <IB label="書式のコピー/貼り付け" w="w-6"><Brush /></IB>
      </div>
    </div>
  );
}

type Item = { t: string; k?: string; end?: string; icon?: React.ReactNode; sub?: boolean; hot?: boolean };
const sections: Item[][] = [
  [{ t: "スマート検索", k: "L", icon: <SmartFind /> }],
  [{ t: "挿入", k: "I", end: "..." }, { t: "削除", k: "D", end: "..." }, { t: "数式と値のクリア", k: "N" }],
  [{ t: "翻訳", icon: <Translate /> }],
  [{ t: "クイック分析", k: "Q", icon: <Quick /> }, { t: "フィルター", k: "E", sub: true }, { t: "並べ替え", k: "O", sub: true }],
  [{ t: "テーブルまたは範囲からデータを...", icon: <TableI /> }],
  [{ t: "新しいコメント", k: "M", icon: <Comment /> }, { t: "新しいメモ", k: "N", icon: <Memo /> }],
  [
    { t: "セルの書式設定", k: "F", end: "...", icon: <CellProps /> },
    { t: "ドロップダウン リストから選択", k: "K", end: "..." },
    { t: "ふりがなの表示", k: "S", icon: <Ruby /> },
    { t: "名前の定義", k: "A", end: "..." },
  ],
  [{ t: "リンク", k: "I", icon: <Chain />, sub: true }, { t: "ハイパーリンクの削除", k: "R", icon: <ChainDel />, hot: true }],
  [{ t: "この範囲にリンクする", k: "L", icon: <RangeLink /> }],
];

function MenuItem({ t, k, end, icon, sub, hot }: Item) {
  return (
    <button role="menuitem" className={`flex h-7 w-full items-center whitespace-nowrap pl-[13px] pr-2 text-left ${hot ? "bg-[#f3f3f3]" : ""}`}>
      <span className="flex w-[25px] shrink-0">{icon}</span>
      <span>{t}{k && <span className="text-xs">(<u className="underline-offset-2">{k}</u>){end}</span>}</span>
      {sub && <Ico w={7} h={10} className="ml-auto"><path d="M1 .700L5.500 5 1 9.300" strokeWidth="1.200" /></Ico>}
    </button>
  );
}

function ContextMenu() {
  return (
    <div role="menu" className="absolute left-[394px] top-[300px] w-[224px] border border-[#c8c8c8] bg-white pb-px pt-[5px] text-[11px] shadow-[2px_2px_4px_rgba(0,0,0,0.15)]">
      <input aria-label="メニューの検索" placeholder="メニューの検索" className="mx-[5px] mb-1 block h-[27px] w-[212px] border border-[#808080] pl-3 outline-none placeholder:text-[#707070]" />
      <MenuItem t="切り取り" k="T" icon={<Scissors />} />
      <MenuItem t="コピー" k="C" icon={<CopyI />} />
      <div className="flex h-[31px] items-center pl-[13px] font-bold"><span className="w-[25px]"><PasteSmall /></span>貼り付けのオプション:</div>
      <button aria-label="値のみ貼り付け" className="flex h-8 items-center pl-[38px]"><PasteText /></button>
      <MenuItem t="形式を選択して貼り付け" k="S" end="..." />
      {sections.map((s, i) => (
        <div key={i}>
          <div className="my-px ml-[33px] mr-px h-px bg-[#d0d0d0]" />
          {s.map((it) => <MenuItem key={it.t} {...it} />)}
        </div>
      ))}
    </div>
  );
}

function Marker({ n, pos }: { n: number; pos: string }) {
  return (
    <svg className={`absolute drop-shadow-[2px_2px_2px_rgba(0,0,0,0.6)] ${pos}`} width="50" height="50" viewBox="0 0 50 50" aria-hidden="true">
      <circle cx="25" cy="25" r="20" fill="none" stroke="#fff" strokeWidth="7" />
      <text x="25" y="39" textAnchor="middle" fontSize="38" fontWeight="500" fill="#f00" stroke="#fff" strokeWidth="6" strokeLinejoin="round" paintOrder="stroke" fontFamily="'Noto Sans CJK JP', sans-serif">{n}</text>
      <circle cx="25" cy="25" r="20" fill="none" stroke="#f00" strokeWidth="2" />
    </svg>
  );
}

function Annotations() {
  return (
    <div className="pointer-events-none">
      <svg className="absolute left-[244px] top-[300px] drop-shadow-[2px_3px_2px_rgba(0,0,0,0.5)]" width="52" height="712" viewBox="0 0 52 712" aria-hidden="true">
        <path d="M24.500 3h2L36.500 663l9.500-2L25.500 707 5.500 661l9.500 2z" fill="#f00" />
      </svg>
      <div className="absolute left-[389px] top-[949px] h-[43px] w-[234px] rounded-md border-[6px] border-[#f00] shadow-[1px_2px_4px_rgba(0,0,0,0.5),inset_1px_2px_5px_rgba(0,0,0,0.5)]" />
      <Marker n={1} pos="left-[195px] top-[923px]" />
      <Marker n={2} pos="left-[342px] top-[280px]" />
      <Marker n={3} pos="left-[559px] top-[893px]" />
    </div>
  );
}

function SheetBar() {
  return (
    <div className="flex h-8 shrink-0 items-center">
      <button aria-label="前のシート" className="ml-[28px]"><Ico w={6} h={10}><path d="M5.500.700L1 5l4.500 4.300" stroke="#8a8a8a" strokeWidth="1.200" /></Ico></button>
      <button aria-label="次のシート" className="ml-[27px]"><Ico w={6} h={10}><path d="M.500.700L5 5 .500 9.300" stroke="#8a8a8a" strokeWidth="1.200" /></Ico></button>
      <button className="ml-[47px] flex h-7 w-[70px] justify-center self-start rounded-b bg-white shadow-[0_1px_1px_rgba(0,0,0,0.2)]">
        <span className="h-6 border-b-2 border-[#107c41] px-[2px] text-sm leading-[27px]">Sheet1</span>
      </button>
      <span className="ml-1 h-[18px] w-px bg-[#c8c8c8]" />
      <button aria-label="新しいシート" className="ml-[42px]"><Ico w={11} h={11}><path d="M5.500 0v11M0 5.500h11" strokeWidth="1.200" /></Ico></button>
      <div className="flex-1" />
      <span className="mr-[14px] flex flex-col gap-[3px]">
        {[0, 1, 2].map((i) => <span key={i} className="h-[2px] w-[2px] bg-[#444]" />)}
      </span>
      <div className="mr-[19px] flex h-[17px] w-[38%] items-center rounded-full bg-[#f5f5f5] px-[5px]">
        <svg width="7" height="9" viewBox="0 0 7 9" aria-hidden="true"><path d="M7 0v9L0 4.500z" fill="#666" /></svg>
        <span className="ml-[5px] mr-8 h-[9px] flex-1 rounded-full bg-[#707070]" />
        <svg width="7" height="9" viewBox="0 0 7 9" aria-hidden="true"><path d="M0 0v9l7-4.500z" fill="#666" /></svg>
      </div>
    </div>
  );
}

function StatusBar() {
  return (
    <footer className="flex h-[22px] shrink-0 items-center border-t border-[#c8c8c8] bg-[#f5f5f5]">
      <span className="ml-2">準備完了</span>
      <Ico w={15} h={14} className="ml-[19px]"><path d="M5 12.500H.600V1h13v3M.600 3.500h13M3 6.500h3M3 9h2" /><circle cx="10" cy="9" r="4" /><circle cx="10" cy="9" r="1.800" fill={D} /></Ico>
      <div className="flex-1" />
      <span className="mr-[19px] whitespace-nowrap">データの個数: 50</span>
      <button aria-label="標準" className="flex h-full w-10 items-center justify-center bg-[#dcdcdc]"><Ico w={13} h={13}><path d="M.500.500h12v12H.500zM.500 4.500h12M.500 8.500h12M4.500.500v12M8.500.500v12" stroke="#222" /></Ico></button>
      <button aria-label="ページ レイアウト" className="flex w-10 justify-center"><Ico w={14} h={13}><path d="M.600.600h12.800v11.800H.600zM3.500 3h7v7.500h-7zM5 5h4M5 7h4M5 9h4" stroke="#222" /></Ico></button>
      <button aria-label="改ページ プレビュー" className="flex w-10 justify-center"><Ico w={14} h={13}><path d="M.600.600h12.800v11.800H.600zM.600 8h8V.600M4.500.600V4" stroke="#222" /></Ico></button>
      <button aria-label="縮小" className="ml-[6px] w-[10px]"><span className="block h-px w-2 bg-[#333]" /></button>
      <input type="range" aria-label="ズーム" defaultValue={50} className="mx-1 h-3 w-[100px] appearance-none bg-[linear-gradient(#777,#777)] bg-[length:100%_1px] bg-center bg-no-repeat [&::-webkit-slider-thumb]:h-3 [&::-webkit-slider-thumb]:w-[5px] [&::-webkit-slider-thumb]:appearance-none [&::-webkit-slider-thumb]:bg-[#555]" />
      <button aria-label="拡大"><Ico w={9} h={9}><path d="M4.500 0v9M0 4.500h9" /></Ico></button>
      <span className="ml-[13px] mr-[21px]">100%</span>
    </footer>
  );
}

export default function App() {
  return (
    <div className="relative flex h-screen flex-col overflow-hidden border-x border-b border-[#107c41] bg-[#efefef] font-['Noto_Sans','Noto_Sans_CJK_JP',sans-serif] text-xs text-[#262626] [font-feature-settings:'palt']">
      <TitleBar />
      <TabRow />
      <Ribbon />
      <FormulaBar />
      <main className="flex min-h-0 flex-1">
        <div className="flex min-w-0 flex-1 bg-white"><Grid /></div>
        <div className="flex w-[21px] shrink-0 flex-col items-center px-[2px]">
          <div className="flex w-full flex-1 flex-col items-center rounded-full bg-[#f5f5f5] py-[5px]">
            <svg width="9" height="7" viewBox="0 0 9 7" aria-hidden="true"><path d="M0 7h9L4.500 0z" fill="#666" /></svg>
            <span className="mt-[5px] h-[38%] w-[9px] rounded-full bg-[#707070]" />
            <svg className="mt-auto" width="9" height="7" viewBox="0 0 9 7" aria-hidden="true"><path d="M0 0h9L4.500 7z" fill="#666" /></svg>
          </div>
        </div>
      </main>
      <SheetBar />
      <StatusBar />
      <MiniToolbar />
      <ContextMenu />
      <Annotations />
    </div>
  );
}
